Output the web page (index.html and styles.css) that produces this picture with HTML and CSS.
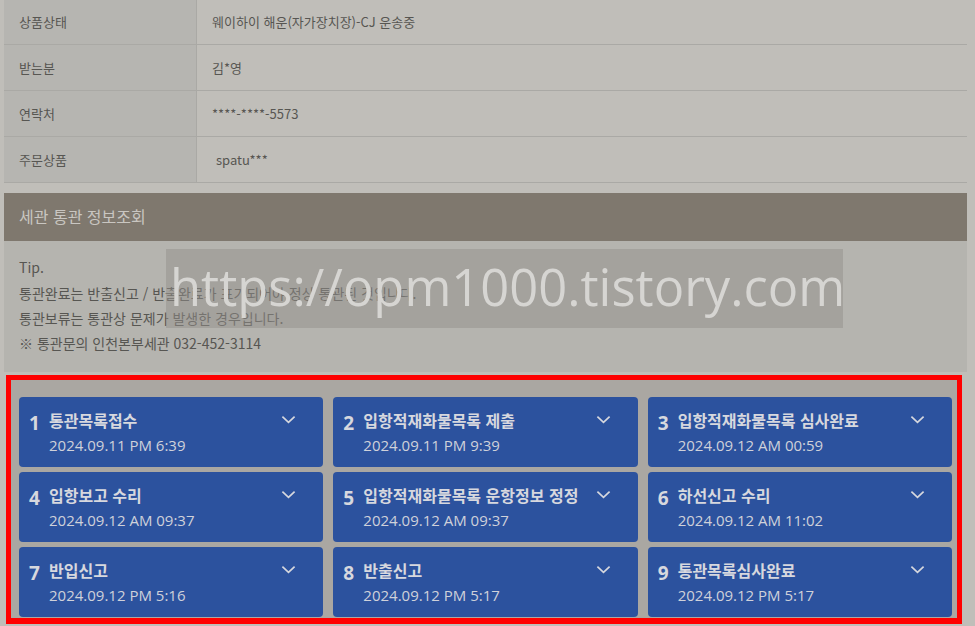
FILE: index.html
```
<!DOCTYPE html>
<html lang="ko">
<head>
    <meta charset="UTF-8">
    <meta name="viewport" content="width=device-width, initial-scale=1.0">
    <title>주문 배송조회</title>
    <link rel="stylesheet" href="styles.css">
</head>
<body>
    <div class="wrap">
        <!-- 주문 정보 -->
        <table class="info">
            <tr><th>상품상태</th><td>웨이하이 해운(자가장치장)-CJ 운송중</td></tr>
            <tr><th>받는분</th><td>김*영</td></tr>
            <tr><th>연락처</th><td>****-****-5573</td></tr>
            <tr><th>주문상품</th><td class="goods">spatu***</td></tr>
        </table>

        <!-- 세관 통관 -->
        <div class="section-title">세관 통관 정보조회</div>
        <div class="tip">
            <p class="tip-head">Tip.</p>
            <p>통관완료는 반출신고 / 반출완료가 표기되어야 정상 통관된 것입니다.</p>
            <p>통관보류는 통관상 문제가 발생한 경우입니다.</p>
            <p>※ 통관문의 인천본부세관 032-452-3114</p>
        </div>

        <div class="steps">
            <div class="step"><span class="num">1</span><div class="txt"><b>통관목록접수</b><span>2024.09.11 PM 6:39</span></div><svg class="arrow" viewBox="0 0 16 9"><polyline points="1.5,1.5 8,7.5 14.5,1.5"/></svg></div>
            <div class="step"><span class="num">2</span><div class="txt"><b>입항적재화물목록 제출</b><span>2024.09.11 PM 9:39</span></div><svg class="arrow" viewBox="0 0 16 9"><polyline points="1.5,1.5 8,7.5 14.5,1.5"/></svg></div>
            <div class="step"><span class="num">3</span><div class="txt"><b>입항적재화물목록 심사완료</b><span>2024.09.12 AM 00:59</span></div><svg class="arrow" viewBox="0 0 16 9"><polyline points="1.5,1.5 8,7.5 14.5,1.5"/></svg></div>
            <div class="step"><span class="num">4</span><div class="txt"><b>입항보고 수리</b><span>2024.09.12 AM 09:37</span></div><svg class="arrow" viewBox="0 0 16 9"><polyline points="1.5,1.5 8,7.5 14.5,1.5"/></svg></div>
            <div class="step"><span class="num">5</span><div class="txt"><b>입항적재화물목록 운항정보 정정</b><span>2024.09.12 AM 09:37</span></div><svg class="arrow" viewBox="0 0 16 9"><polyline points="1.5,1.5 8,7.5 14.5,1.5"/></svg></div>
            <div class="step"><span class="num">6</span><div class="txt"><b>하선신고 수리</b><span>2024.09.12 AM 11:02</span></div><svg class="arrow" viewBox="0 0 16 9"><polyline points="1.5,1.5 8,7.5 14.5,1.5"/></svg></div>
            <div class="step"><span class="num">7</span><div class="txt"><b>반입신고</b><span>2024.09.12 PM 5:16</span></div><svg class="arrow" viewBox="0 0 16 9"><polyline points="1.5,1.5 8,7.5 14.5,1.5"/></svg></div>
            <div class="step"><span class="num">8</span><div class="txt"><b>반출신고</b><span>2024.09.12 PM 5:17</span></div><svg class="arrow" viewBox="0 0 16 9"><polyline points="1.5,1.5 8,7.5 14.5,1.5"/></svg></div>
            <div class="step"><span class="num">9</span><div class="txt"><b>통관목록심사완료</b><span>2024.09.12 PM 5:17</span></div><svg class="arrow" viewBox="0 0 16 9"><polyline points="1.5,1.5 8,7.5 14.5,1.5"/></svg></div>
        </div>
    </div>

    <!-- 워터마크 -->
    <div class="watermark">https://opm1000.tistory.com</div>
</body>
</html>
```

FILE: styles.css
```
/* 전체 (어두운 오버레이 느낌) */
body {
    margin: 0;
    background: #c0beb9;
    font-family: "Noto Sans CJK KR", "Noto Sans", sans-serif;
    color: #575652;
    overflow: hidden;
}

.wrap {
    width: 963px;
    margin-left: 4px;
}

/* 주문 정보 테이블 */
.info {
    width: 100%;
    margin-top: -1px;
    border-collapse: collapse;
    font-size: 13px;
}

.info th,
.info td {
    height: 45px;
    padding: 0 0 0 15px;
    border-bottom: 1px solid #aaa9a5;
    text-align: left;
    font-weight: normal;
}

.info th {
    width: 177px;
    background: #b6b5b1;
    border-right: 1px solid #aaa9a5;
}

.info td.goods {
    padding-left: 19px;
}

/* 세관 통관 */
.section-title {
    margin-top: 10px;
    height: 48px;
    line-height: 46px;
    padding-left: 15px;
    background: #7f786e;
    color: #c9c6c1;
    font-size: 16px;
}

.tip {
    background: #b5b4af;
    padding: 14px 15px 16px;
    font-size: 14px;
}

.tip p {
    margin: 0;
    line-height: 25px;
}

.tip .tip-head {
    margin-bottom: 1px;
}

/* 통관 단계 */
.steps {
    margin: 3px 5px 0 2px;
    border: 5px solid #ff0000;
    border-bottom-width: 6px;
    background: #aaa7a2;
    padding: 17px 5px 1px 8px;
    display: grid;
    grid-template-columns: repeat(3, 1fr);
    column-gap: 10px;
    row-gap: 5px;
}

.step {
    height: 70px;
    background: #2c529e;
    border-radius: 4px;
    display: flex;
    align-items: flex-start;
    padding: 12px 27px 0 10px;
    box-sizing: border-box;
    color: #d7d8de;
}

.num {
    width: 20px;
    font-size: 19px;
    font-weight: bold;
    line-height: 1;
    margin-top: 5px;
    font-family: "Open Sans", sans-serif;
}

.txt {
    flex: 1;
    display: flex;
    flex-direction: column;
    white-space: nowrap;
}

.txt b {
    font-size: 16px;
    font-weight: bold;
    line-height: 22px;
}

.txt span {
    padding-top: 2px;
    font-size: 15px;
    line-height: 25px;
    color: #cfd1da;
    font-family: "Open Sans", "Noto Sans CJK KR", sans-serif;
}

.arrow {
    width: 15px;
    height: 9px;
    margin-top: 6px;
    fill: none;
    stroke: #d7d8de;
    stroke-width: 1.8;
}

/* 워터마크 */
.watermark {
    position: absolute;
    left: 166px;
    top: 249px;
    width: 673px;
    height: 79px;
    padding-left: 4px;
    background: rgba(147, 144, 139, 0.5);
    color: #d6d5d2;
    font-family: "Open Sans", sans-serif;
    font-size: 50.7px;
    line-height: 76px;
    white-space: nowrap;
}
```
